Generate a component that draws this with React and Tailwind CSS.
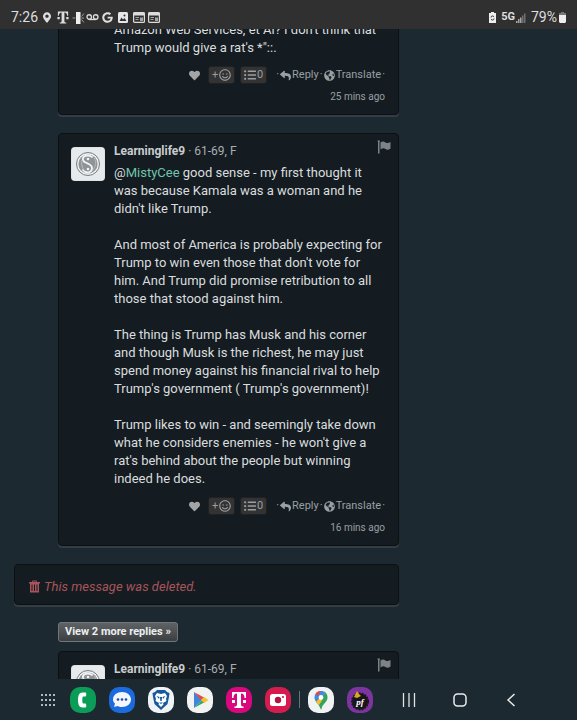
import React from "react";
import { FaHeart, FaReply, FaMapMarkerAlt, FaListUl } from "react-icons/fa";
import { FaGoogle, FaRegSmile, FaGlobeAmericas } from "react-icons/fa";

function Flag() {
  return (
    <svg viewBox="0 0 28 28" className="size-[14px] fill-[#7f8386]" aria-hidden="true">
      <path d="M1 1h5v2H5v24H2V3H1z" />
      <path d="M7 5c4-3 7-2 10 0s6 1 10-1v13c-4 3-7 3-10 1s-6-2-10 1z" />
    </svg>
  );
}

function Trash() {
  return (
    <svg viewBox="0 0 22 24" className="h-[13px] w-[11px]" aria-hidden="true">
      <path
        fill="#a8545a"
        fillRule="evenodd"
        d="M7 0h8l1 3h6v3h-2v18H2V6H0V3h6zM8 2v1h6V2zM5 8v13h2V8zm5 0v13h2V8zm5 0v13h2V8z"
      />
    </svg>
  );
}

function Avatar() {
  return (
    <svg viewBox="0 0 34 34" className="size-[34px] shrink-0 rounded-[4px] bg-[#dde3e7]" role="img" aria-label="Learninglife9">
      <rect x="1" y="1" width="32" height="32" rx="3" fill="#e6eaed" />
      <circle cx="17" cy="17" r="11.5" fill="#eef0f1" stroke="#777b7e" strokeWidth="1" />
      <circle cx="17" cy="17" r="9.6" fill="#8f9395" />
      <path
        d="M21 10c-4-3-10-1-9 3s9 3 9 8-6 6-9 2"
        fill="none"
        stroke="#f1f3f4"
        strokeWidth="1.8"
        strokeLinecap="round"
      />
      <path d="M23 11c3 4 2 9-2 13M11 13c-1 4 0 8 3 11" fill="none" stroke="#b9bdbf" strokeWidth="1" />
      <circle cx="17" cy="12" r="1.3" fill="#f1f3f4" />
      <circle cx="17" cy="22" r="1.3" fill="#f1f3f4" />
    </svg>
  );
}

function Footer({ time }) {
  return (
    <footer className="text-[11px] text-[#9a9fa2]">
      <div className="flex h-[18px] items-center justify-end">
        <button type="button" aria-label="Like" className="mr-[8px]">
          <FaHeart className="size-[11px] text-[#a2a4a5]" />
        </button>
        <button type="button" aria-label="Add reaction" className="mr-[5px] flex h-[18px] w-[27px] items-center justify-center gap-px rounded-[3px] border border-[#1f2224] bg-[#333334]">
          <span>+</span>
          <FaRegSmile className="size-[12px]" />
        </button>
        <button type="button" aria-label="Reactions" className="mr-[9px] flex h-[18px] w-[27px] items-center justify-center gap-px rounded-[3px] border border-[#1f2224] bg-[#333334]">
          <FaListUl className="size-[12px]" />
          <span>0</span>
        </button>
        <span>·</span>
        <a href="#reply" className="ml-px flex items-center gap-px">
          <FaReply className="size-[11px]" />
          Reply
        </a>
        <span className="ml-px">·</span>
        <a href="#translate" className="ml-px flex items-center gap-px">
          <FaGlobeAmericas className="size-[11px]" />
          Translate
        </a>
        <span className="ml-px">·</span>
      </div>
      <time className="mt-1 block h-[18px] text-right text-[10px] leading-[18px]">{time}</time>
    </footer>
  );
}

function Card({ children, className = "" }) {
  return (
    <article className={"rounded-[4px] border border-[#0b1013] bg-[#141c21] shadow-[0_2px_0_#343d43] " + className}>
      {children}
    </article>
  );
}

function Author() {
  return (
    <header className="flex h-[18px] items-center justify-between text-[12px] leading-[18px]">
      <p className="text-[#a9aeb1]">
        <a href="#author" className="font-bold text-[#c9cdcf]">Learninglife9</a> · 61-69, F
      </p>
      <button type="button" aria-label="Report" className="-mr-[6px] pb-[8px]">
        <Flag />
      </button>
    </header>
  );
}

function TMark({ className }) {
  return (
    <svg viewBox="0 0 24 28" className={className} fill="currentColor" aria-hidden="true">
      <path d="M1 1h22v9h-2c0-4-2-7-6-7v18c0 3 1 4 4 4v2H5v-2c3 0 4-1 4-4V3c-4 0-6 3-6 7H1zM0 13h5v5H0zM19 13h5v5h-5z" />
    </svg>
  );
}

function Window() {
  return (
    <svg viewBox="0 0 24 22" className="h-[11px] w-[12px]" aria-hidden="true">
      <rect x="1.200" y="1.200" width="21.600" height="19.600" rx="2" fill="none" stroke="#dcdcdc" strokeWidth="2.400" />
      <path fill="#dcdcdc" d="M1 1h22v6H1z" />
      <path fill="#a5a5a5" d="M5 10h7v2H5zM5 14h6v2H5zM14 11h6v7h-6z" />
    </svg>
  );
}

function StatusBar() {
  return (
    <header className="flex h-[29px] shrink-0 items-center justify-between bg-[#303030] pt-[6px] pr-[11px] pl-[11px] text-[14px] text-[#dedede]">
      <div className="flex items-center">
        <span className="w-[32px]">7:26</span>
        <FaMapMarkerAlt className="mr-[6px] h-[11px] w-[8px]" />
        <TMark className="mr-[3px] h-[13px] w-[12px]" />
        <svg viewBox="0 0 24 24" className="mr-px h-[12px] w-[13px]" aria-hidden="true">
          <path d="M7 0h9v24H7z" fill="#eee" />
          <path d="M0 12h6M18 9l5-6M18 12h5M18 15l5 6" stroke="#999" strokeWidth="2" />
        </svg>
        <svg viewBox="0 0 26 14" className="mr-[3px] h-[7px] w-[13px]" fill="none" stroke="#dedede" strokeWidth="2.6" aria-hidden="true">
          <circle cx="6.500" cy="6" r="4.500" />
          <circle cx="19.500" cy="6" r="4.500" />
          <path d="M6 11h14" />
        </svg>
        <FaGoogle className="mr-[5px] size-[11px]" />
        <svg viewBox="0 0 20 22" className="mr-[5px] h-[11px] w-[10px]" aria-hidden="true">
          <rect width="20" height="22" rx="3" fill="#e8e8e8" />
          <path d="M3 18l4-7 3 4 3-3 4 6z" fill="#303030" />
          <circle cx="13" cy="7" r="2" fill="#303030" />
        </svg>
        <span className="flex gap-[3px]">
          <Window />
          <Window />
        </span>
      </div>
      <div className="flex items-center">
        <svg viewBox="0 0 14 22" className="mr-[5px] h-[11px] w-[7px]" aria-hidden="true">
          <path d="M4 0h6v2h4v20H0V2h4z" fill="#eee" />
          <path d="M4 11c0-4 5-4 6-1M10 13c0 4-5 4-6 1" fill="none" stroke="#303030" strokeWidth="2" />
        </svg>
        <span className="mr-px text-[11px] font-bold">5G</span>
        <svg viewBox="0 0 20 20" className="mr-[5px] size-[10px]" aria-hidden="true">
          <path d="M0 20v-4h3v4zM4 20v-8h3v8zM8 20V9h3v11z" fill="#a5a5a5" />
          <path d="M12 20V5h3v15zM16 20V1h3v19z" fill="#6f6f6f" />
        </svg>
        <span className="mr-[2px]">79%</span>
        <svg viewBox="0 0 14 22" className="h-[11px] w-[7px]" aria-hidden="true">
          <path d="M4 0h6v2h4v5H0V2h4z" fill="#777" />
          <path d="M0 6h14v14l-2 2H2l-2-2z" fill="#eee" />
        </svg>
      </div>
    </header>
  );
}

function AppIcon({ label, color, children }) {
  return (
    <button type="button" aria-label={label} className={"size-[26px] overflow-hidden rounded-[10px] " + color}>
      <svg viewBox="0 0 26 26" className="size-[26px]" aria-hidden="true">
        {children}
      </svg>
    </button>
  );
}

function NavBar() {
  return (
    <nav className="flex h-[41px] shrink-0 items-center bg-[#1d2930] pl-[41px]">
      <button type="button" aria-label="All apps" className="mr-[15px]">
        <svg viewBox="0 0 14 14" className="size-[14px] fill-[#e8eaeb]" aria-hidden="true">
          {[2, 7, 12].map((y) =>
            [1, 5, 9, 13].map((x) => <circle key={x + "-" + y} cx={x} cy={y} r="1" />)
          )}
        </svg>
      </button>
      <div className="flex gap-[13px]">
        <AppIcon label="Phone" color="bg-[#0b9c58]">
          <path
            d="M15.500 5.500h-3C9 5.500 8 9 8 13s1 7.500 4.500 7.500h3c1 0 1-3.500 0-4h-2.500c-1-1-1-6 0-7h2.500c1-.5 1-4 0-4z"
            fill="#fff"
          />
        </AppIcon>
        <AppIcon label="Messages" color="bg-[#1c6bdc]">
          <path d="M13 5c5 0 9 3 9 7.500S18 20 13 20c-2 0-3-.3-4.500-1L5 20l1-3.500c-1.300-1-2-2.500-2-4C4 8 8 5 13 5z" fill="#f3f6fb" />
          <circle cx="9" cy="12.500" r="1.300" fill="#174fae" />
          <circle cx="13" cy="12.500" r="1.300" fill="#174fae" />
          <circle cx="17" cy="12.500" r="1.300" fill="#174fae" />
        </AppIcon>
        <AppIcon label="Brave" color="bg-[#f0f3f5]">
          <path d="M9 3h8l2 2 2.500 1-.5 4-1.500 7L13 23l-6.500-6L5 10l-.5-4L7 5z" fill="#17599a" />
          <path d="M9 6l4 1 4-1 2 3-1 3 .5 2-3.500 2 .5 1.500L13 20l-2.500-2.500.5-1.500-3.500-2 .5-2-1-3z" fill="#fff" />
          <path d="M8.500 9l3 1-.5 2zM17.500 9l-3 1 .5 2zM12 10h2l-.3 4H12.300zM11 15.500h4L13 17z" fill="#17599a" />
        </AppIcon>
        <AppIcon label="Play Store" color="bg-[#f1f3f3]">
          <path d="M7 5v16l8-8z" fill="#4285dc" />
          <path d="M7 5l11 6-3.500 2.500z" fill="#e44b43" />
          <path d="M7 21l8-8 3 2z" fill="#34a467" />
          <path d="M17 10l4.500 3-4.500 3-3-3z" fill="#f8bd2c" />
        </AppIcon>
        <AppIcon label="T-Mobile" color="bg-[#d9087c]">
          <path
            d="M6 5h14v6h-1.500c0-3-1-4.500-3.500-4.500V17c0 2 .5 2.500 2.500 2.500V21h-9v-1.500c2 0 2.500-.5 2.500-2.500V6.500C8.500 6.500 7.500 8 7.500 11H6zM6 13h3v3H6zM17 13h3v3h-3z"
            fill="#fff"
          />
        </AppIcon>
        <AppIcon label="Camera" color="bg-[#d61b4e]">
          <rect x="5" y="7" width="16" height="12" rx="2.500" fill="#fff" />
          <circle cx="13" cy="13" r="3.200" fill="#b51441" />
          <circle cx="18" cy="10" r="1" fill="#b51441" />
        </AppIcon>
      </div>
      <span className="mx-[8px] h-[17px] w-px bg-[#66737a]" />
      <div className="flex gap-[13px]">
        <AppIcon label="Maps" color="bg-[#f1f3f3]">
          <path d="M13 4c-4 0-6.500 3-6.500 6.500 0 2 1 3.500 2 5L17.500 5.500C16.500 4.500 15 4 13 4z" fill="#4286e8" />
          <path d="M7.500 7L10 9l3-5c-2.500 0-4.500 1-5.500 3z" fill="#e24a3f" />
          <path d="M8 15l9.500-9.500c1.300 1 2 3 2 5 0 5-5.500 6-6 12C12 22.500 12 18 8 15z" fill="#33a45c" />
          <path d="M8 15l4-4.500 2 3-3 4.500z" fill="#f9bd27" />
          <circle cx="13" cy="10.500" r="2.400" fill="#fff" />
        </AppIcon>
        <AppIcon label="pf" color="bg-[#7c35a0]">
          <circle cx="13" cy="14.500" r="8" fill="#19151b" stroke="#19151b" strokeWidth="2" strokeDasharray="2 1" />
          <path d="M7 10l3-6 2 3 2 2-4 2z" fill="#d7a91d" />
          <text x="13" y="18" textAnchor="middle" fontFamily="Liberation Serif, serif" fontSize="9" fontWeight="700" fontStyle="italic" fill="#fff">pf</text>
        </AppIcon>
      </div>
      <div className="ml-[29px] flex items-center gap-[37px]">
        <button type="button" aria-label="Recents">
          <svg viewBox="0 0 14 14" className="size-[14px]" stroke="#dfe3e5" strokeWidth="1.300" aria-hidden="true">
            <path d="M1.500 0v14M7 0v14M12.500 0v14" />
          </svg>
        </button>
        <button type="button" aria-label="Home">
          <svg viewBox="0 0 14 14" className="size-[14px]" fill="none" stroke="#e8ebec" strokeWidth="1.500" aria-hidden="true">
            <rect x="1" y="1" width="12" height="12" rx="3.500" />
          </svg>
        </button>
        <button type="button" aria-label="Back">
          <svg viewBox="0 0 14 14" className="size-[14px]" fill="none" stroke="#e8ebec" strokeWidth="1.500" aria-hidden="true">
            <path d="M10.500 1L4 7l6.500 6" />
          </svg>
        </button>
      </div>
    </nav>
  );
}

export default function App() {
  return (
    <div className="flex h-screen flex-col overflow-hidden bg-[#1d2930] font-['Roboto','Liberation_Sans',sans-serif]">
      <StatusBar />
      <main className="min-h-0 flex-1 overflow-hidden pl-[14px] text-[13px] leading-[18px] text-[#dadddf]">
        <div className="-mt-[9px] w-full max-w-[385px]">
          <Card className="ml-[44px] pr-[13px] pb-[8px] pl-[55px]">
            <p className="whitespace-pre-line">
              {"Amazon Web Services, et Al? I don't think that\nTrump would give a rat's *\"::."}
            </p>
            <div className="mt-[9px]">
              <Footer time="25 mins ago" />
            </div>
          </Card>

          <Card className="mt-[18px] ml-[44px] flex gap-[9px] pt-2 pr-[13px] pb-[8px] pl-[12px]">
            <div className="pt-[5px]">
              <Avatar />
            </div>
            <div className="min-w-0 flex-1">
              <Author />
              <p className="mt-[4px] whitespace-pre-line">
                @<a href="#mistycee" className="text-[#6fc5ae]">MistyCee</a>
                {" good sense - my first thought it\nwas because Kamala was a woman and he\ndidn't like Trump.\n\nAnd most of America is probably expecting for\nTrump to win even those that don't vote for\nhim. And Trump did promise retribution to all\nthose that stood against him.\n\nThe thing is Trump has Musk and his corner\nand though Musk is the richest, he may just\nspend money against his financial rival to help\nTrump's government ( Trump's government)!\n\nTrump likes to win - and seemingly take down\nwhat he considers enemies - he won't give a\nrat's behind about the people but winning\nindeed he does."}
              </p>
              <div className="mt-[9px]">
                <Footer time="16 mins ago" />
              </div>
            </div>
          </Card>

          <Card className="mt-[18px] flex h-[41px] items-center gap-[4px] pt-[4px] pl-[14px] text-[#a8545a] italic">
            <Trash />
            <p>This message was deleted.</p>
          </Card>

          <button
            type="button"
            className="mt-[17px] ml-[44px] block h-[20px] rounded-[3px] border border-[#70777b] bg-linear-to-b from-[#606366] to-[#3c3f42] px-[6px] text-[11px] leading-[18px] font-bold text-[#eceeef]"
          >
            View 2 more replies »
          </button>

          <Card className="mt-[9px] ml-[44px] flex gap-[9px] pt-2 pr-[13px] pb-[8px] pl-[12px]">
            <div className="pt-[5px]">
              <Avatar />
            </div>
            <div className="min-w-0 flex-1">
              <Author />
            </div>
          </Card>
        </div>
      </main>
      <NavBar />
    </div>
  );
}
